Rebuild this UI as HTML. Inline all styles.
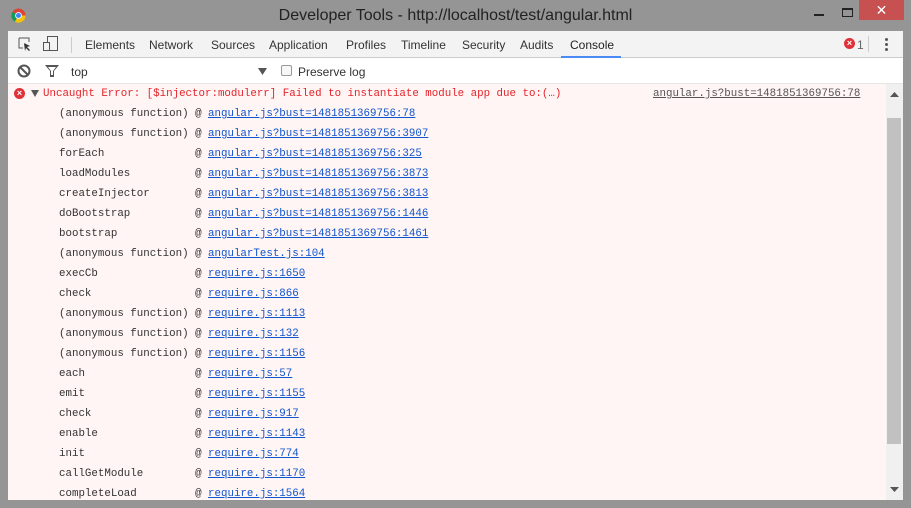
<!DOCTYPE html>
<html><head><style>
*{margin:0;padding:0;box-sizing:border-box}
body{width:911px;height:508px;background:#959595;position:relative;overflow:hidden;font-family:"Liberation Sans",sans-serif}
.title{position:absolute;top:7px;left:0;width:911px;text-align:center;font-size:16px;color:#222}
.win{position:absolute;left:8px;top:31px;width:895px;height:469px;background:#fff5f4}
.tabs{position:absolute;left:0;top:0;width:895px;height:27px;background:#f3f3f3;border-bottom:1px solid #ccc;font-size:12px;color:#333}
.tabs span{position:absolute;top:7px}
.filt{position:absolute;left:0;top:27px;width:895px;height:26px;background:#fff;border-bottom:1px solid #e6e6e6;font-size:12px;color:#333}
.mono{font-family:"Liberation Mono",monospace;font-size:10.8px}
.row{position:absolute;left:51px;height:20px;white-space:pre;color:#333}
.row a{color:#1155cc;text-decoration:underline}
.sb{position:absolute;right:0;top:53px;width:17px;height:416px;background:#f0f0f0}
</style></head><body>
<svg style="position:absolute;left:11px;top:8px" width="15" height="15" viewBox="0 0 16 16"><circle cx="8" cy="8" r="7.5" fill="#db4437"/><path d="M8 8 L15.5 8 A7.5 7.5 0 0 1 4 14.5Z" fill="#f4c20d"/><path d="M8 8 L4 14.5 A7.5 7.5 0 0 1 1.5 4.3Z" fill="#0f9d58"/><circle cx="8" cy="8" r="3.6" fill="#fff"/><circle cx="8" cy="8" r="2.7" fill="#4285f4"/></svg>
<div class="title">Developer Tools - http://localhost/test/angular.html</div>
<div style="position:absolute;left:814px;top:14px;width:10px;height:2px;background:#222"></div>
<div style="position:absolute;left:842px;top:8px;width:11px;height:9px;border:1px solid #222;border-top-width:2px"></div>
<div style="position:absolute;left:859px;top:0;width:45px;height:20px;background:#c75050;color:#fff;text-align:center;font-size:14px;line-height:20px">✕</div>
<div class="win">
<div class="tabs">
<svg style="position:absolute;left:10px;top:6px" width="14" height="14"><path d="M1 1h10v4M1 1v10h4" stroke="#555" fill="none"/><path d="M6 6l6 3-3 1 3 3-1 1-3-3-1 3z" fill="#333"/></svg>
<svg style="position:absolute;left:35px;top:5px" width="16" height="16"><rect x="4.5" y="0.5" width="10" height="14" fill="none" stroke="#555"/><rect x="0.5" y="6.5" width="6" height="8" fill="#f3f3f3" stroke="#555"/></svg>
<div style="position:absolute;left:63px;top:6px;width:1px;height:16px;background:#ccc"></div>
<span style="left:77px">Elements</span><span style="left:141px">Network</span><span style="left:203px">Sources</span><span style="left:261px">Application</span><span style="left:338px">Profiles</span><span style="left:393px">Timeline</span><span style="left:454px">Security</span><span style="left:512px">Audits</span><span style="left:562px;color:#222">Console</span>
<div style="position:absolute;left:553px;top:25px;width:60px;height:2px;background:#4a8af4"></div>
<div style="position:absolute;left:836px;top:7px;width:11px;height:11px;border-radius:50%;background:#e0313a;color:#fff;font-size:9px;line-height:11px;text-align:center;font-weight:bold">×</div>
<span style="left:849px;color:#666">1</span>
<div style="position:absolute;left:860px;top:5px;width:1px;height:16px;background:#ccc"></div>
<div style="position:absolute;left:877px;top:7px;width:3px;height:3px;border-radius:50%;background:#555;box-shadow:0 5px #555,0 10px #555"></div>
</div>
<div class="filt">
<svg style="position:absolute;left:9px;top:6px" width="14" height="14"><circle cx="7" cy="7" r="5.5" fill="none" stroke="#555" stroke-width="2"/><path d="M3 3l8 8" stroke="#555" stroke-width="2"/></svg>
<svg style="position:absolute;left:37px;top:7px" width="14" height="12"><path d="M0 0h14l-5 6v6h-4v-6z" fill="#555"/><path d="M3 2h8l-3 4v4h-2v-4z" fill="#fff"/></svg>
<span style="position:absolute;left:63px;top:7px">top</span>
<svg style="position:absolute;left:250px;top:10px" width="9" height="7"><path d="M0 0h9l-4.5 7z" fill="#555"/></svg>
<div style="position:absolute;left:273px;top:7px;width:11px;height:11px;border:1px solid #999;border-radius:2px;background:#f7f7f7"></div>
<span style="position:absolute;left:290px;top:7px">Preserve log</span>
</div>
<div style="position:absolute;left:6px;top:57px;width:11px;height:11px;border-radius:50%;background:#e0313a;color:#fff;font-size:9px;line-height:11px;text-align:center;font-weight:bold;font-family:'Liberation Sans'">×</div>
<svg style="position:absolute;left:23px;top:59px" width="8" height="7"><path d="M0 0h8l-4 7z" fill="#555"/></svg>
<div class="mono" style="position:absolute;left:35px;top:57px;color:#e3242b;white-space:pre">Uncaught Error: [$injector:modulerr] Failed to instantiate module app due to:(…)</div>
<div class="mono" style="position:absolute;left:645px;top:57px;color:#555;text-decoration:underline">angular.js?bust=1481851369756:78</div>
<div class="mono">
<div class="row" style="top:77px">(anonymous function) @ <a>angular.js?bust=1481851369756:78</a></div>
<div class="row" style="top:97px">(anonymous function) @ <a>angular.js?bust=1481851369756:3907</a></div>
<div class="row" style="top:117px">forEach              @ <a>angular.js?bust=1481851369756:325</a></div>
<div class="row" style="top:137px">loadModules          @ <a>angular.js?bust=1481851369756:3873</a></div>
<div class="row" style="top:157px">createInjector       @ <a>angular.js?bust=1481851369756:3813</a></div>
<div class="row" style="top:177px">doBootstrap          @ <a>angular.js?bust=1481851369756:1446</a></div>
<div class="row" style="top:197px">bootstrap            @ <a>angular.js?bust=1481851369756:1461</a></div>
<div class="row" style="top:217px">(anonymous function) @ <a>angularTest.js:104</a></div>
<div class="row" style="top:237px">execCb               @ <a>require.js:1650</a></div>
<div class="row" style="top:257px">check                @ <a>require.js:866</a></div>
<div class="row" style="top:277px">(anonymous function) @ <a>require.js:1113</a></div>
<div class="row" style="top:297px">(anonymous function) @ <a>require.js:132</a></div>
<div class="row" style="top:317px">(anonymous function) @ <a>require.js:1156</a></div>
<div class="row" style="top:337px">each                 @ <a>require.js:57</a></div>
<div class="row" style="top:357px">emit                 @ <a>require.js:1155</a></div>
<div class="row" style="top:377px">check                @ <a>require.js:917</a></div>
<div class="row" style="top:397px">enable               @ <a>require.js:1143</a></div>
<div class="row" style="top:417px">init                 @ <a>require.js:774</a></div>
<div class="row" style="top:437px">callGetModule        @ <a>require.js:1170</a></div>
<div class="row" style="top:457px">completeLoad         @ <a>require.js:1564</a></div>
</div>
<div class="sb">
<svg style="position:absolute;left:4px;top:8px" width="9" height="5"><path d="M0 5h9l-4.5-5z" fill="#555"/></svg>
<div style="position:absolute;left:1px;top:34px;width:14px;height:326px;background:#c1c1c1"></div>
<svg style="position:absolute;left:4px;top:403px" width="9" height="5"><path d="M0 0h9l-4.5 5z" fill="#555"/></svg>
</div>
</div>
</body></html>
